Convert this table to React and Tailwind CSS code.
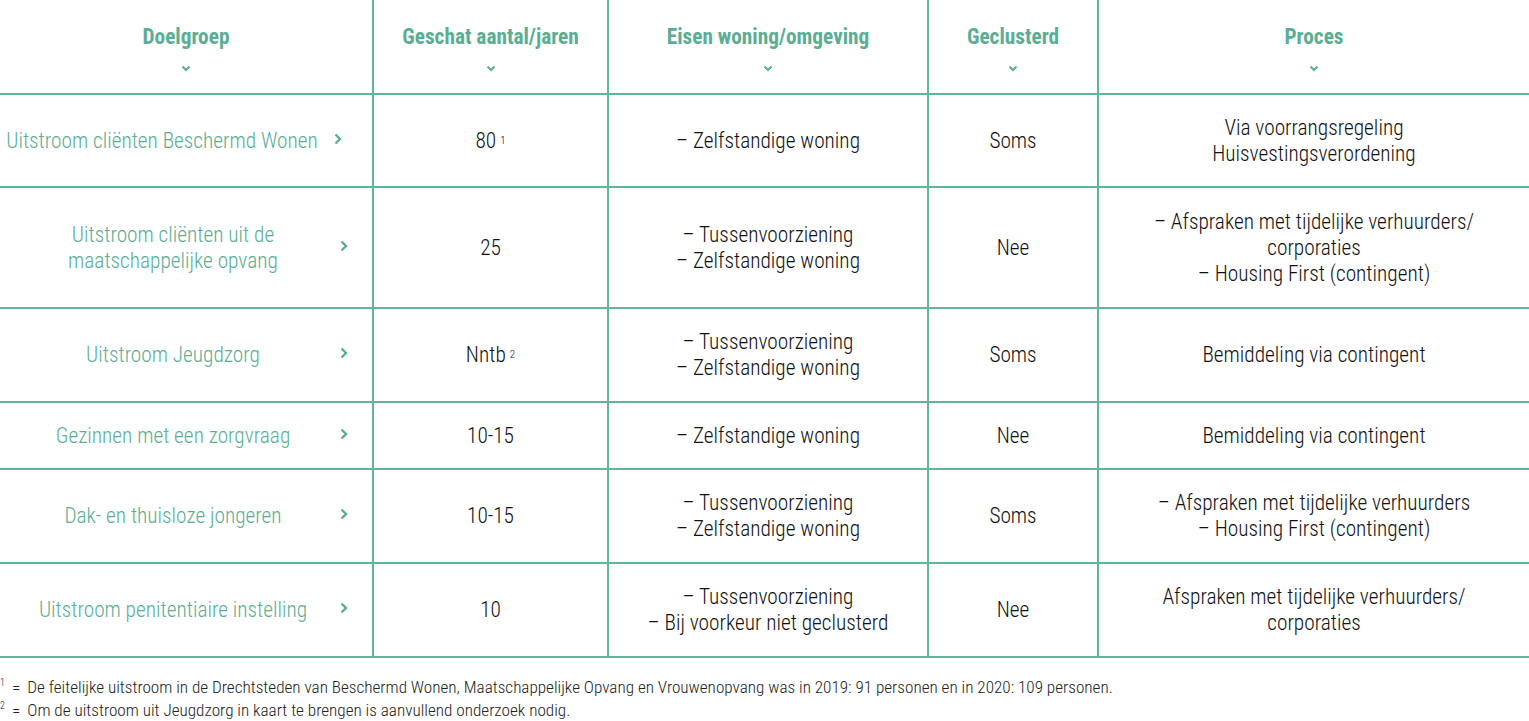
import React from "react";

const headers = ["Doelgroep", "Geschat aantal/jaren", "Eisen woning/omgeving", "Geclusterd", "Proces"];

const rows = [
  {
    h: "h-[93px]",
    group: ["Uitstroom cliënten Beschermd Wonen"],
    count: "80",
    sup: "1",
    eisen: ["– Zelfstandige woning"],
    cluster: "Soms",
    proces: ["Via voorrangsregeling", "Huisvestingsverordening"],
  },
  {
    h: "h-[121px]",
    group: ["Uitstroom cliënten uit de", "maatschappelijke opvang"],
    count: "25",
    eisen: ["– Tussenvoorziening", "– Zelfstandige woning"],
    cluster: "Nee",
    proces: ["– Afspraken met tijdelijke verhuurders/", "corporaties", "– Housing First (contingent)"],
  },
  {
    h: "h-[94px]",
    group: ["Uitstroom Jeugdzorg"],
    count: "Nntb",
    sup: "2",
    eisen: ["– Tussenvoorziening", "– Zelfstandige woning"],
    cluster: "Soms",
    proces: ["Bemiddeling via contingent"],
  },
  {
    h: "h-[67px]",
    group: ["Gezinnen met een zorgvraag"],
    count: "10-15",
    eisen: ["– Zelfstandige woning"],
    cluster: "Nee",
    proces: ["Bemiddeling via contingent"],
  },
  {
    h: "h-[94px]",
    group: ["Dak- en thuisloze jongeren"],
    count: "10-15",
    eisen: ["– Tussenvoorziening", "– Zelfstandige woning"],
    cluster: "Soms",
    proces: ["– Afspraken met tijdelijke verhuurders", "– Housing First (contingent)"],
  },
  {
    h: "h-[94px]",
    group: ["Uitstroom penitentiaire instelling"],
    count: "10",
    eisen: ["– Tussenvoorziening", "– Bij voorkeur niet geclusterd"],
    cluster: "Nee",
    proces: ["Afspraken met tijdelijke verhuurders/", "corporaties"],
  },
];

const ChevronDown = () => (
  <svg width="10" height="7" viewBox="0 0 10 7" className="text-[#5aae93]">
    <path d="M1.5 1.5 L5 5 L8.5 1.5" fill="none" stroke="currentColor" strokeWidth="2" />
  </svg>
);

const ChevronRight = () => (
  <svg width="8" height="12" viewBox="0 0 8 12" className="text-[#5aae93]">
    <path d="M1.5 1.5 L6 6 L1.5 10.5" fill="none" stroke="currentColor" strokeWidth="2.4" />
  </svg>
);

const Lines = ({ lines }) => (
  <div className="flex flex-col items-center leading-[26px]">
    {lines.map((l, i) => (
      <span key={i}>{l}</span>
    ))}
  </div>
);

const cols = "grid grid-cols-[372px_235px_320px_170px_1fr]";
const cell = "flex items-center justify-center text-center border-l-2 border-[#62b49a]";

export default function App() {
  return (
    <div className="w-[1529px] h-[721px] overflow-hidden bg-white font-['Roboto_Condensed','Liberation_Sans_Narrow',Roboto,sans-serif] text-[21.3px] font-light text-[#111]">
      {/* table */}
      <div>
        <div className={`${cols} h-[95px] border-b-2 border-[#62b49a]`}>
          {headers.map((h, i) => (
            <div
              key={h}
              className={`flex flex-col items-center pt-[24px] gap-[15px] font-bold text-[#5aae93] ${
                i > 0 ? "border-l-2 border-[#62b49a]" : ""
              }`}
            >
              <span className="leading-[26px]">{h}</span>
              <ChevronDown />
            </div>
          ))}
        </div>
        {rows.map((r, idx) => (
          <div key={idx} className={`${cols} ${r.h} border-b-2 border-[#62b49a]`}>
            <div className="relative flex items-center">
              <div
                className={`w-[346px] flex justify-center text-[#5aae93] whitespace-nowrap ${
                  idx === 0 ? "pr-[22px]" : ""
                }`}
              >
                <Lines lines={r.group} />
              </div>
              <div
                className={`absolute top-0 bottom-[4px] flex items-center ${
                  idx === 0 ? "right-[30px]" : "right-[24px]"
                }`}
              >
                <ChevronRight />
              </div>
            </div>
            <div className={cell}>
              <span className="leading-[26px]">
                {r.count}
                {r.sup && <sup className="text-[11px] ml-[4px] relative -top-[4px]">{r.sup}</sup>}
              </span>
            </div>
            <div className={cell}>
              <Lines lines={r.eisen} />
            </div>
            <div className={cell}>
              <span>{r.cluster}</span>
            </div>
            <div className={cell}>
              <Lines lines={r.proces} />
            </div>
          </div>
        ))}
      </div>

      {/* footnotes */}
      <div className="pt-[18px] text-[17.15px] leading-[23px] text-[#222]">
        <div className="flex items-start">
          <span className="text-[10px] leading-[10px] w-[12px] pt-[2px]">1</span>
          <span className="mr-[7px]">=</span>
          <span>
            De feitelijke uitstroom in de Drechtsteden van Beschermd Wonen, Maatschappelijke Opvang en Vrouwenopvang was in 2019: 91 personen en in 2020: 109 personen.
          </span>
        </div>
        <div className="flex items-start">
          <span className="text-[10px] leading-[10px] w-[12px] pt-[2px]">2</span>
          <span className="mr-[7px]">=</span>
          <span>Om de uitstroom uit Jeugdzorg in kaart te brengen is aanvullend onderzoek nodig.</span>
        </div>
      </div>
    </div>
  );
}
